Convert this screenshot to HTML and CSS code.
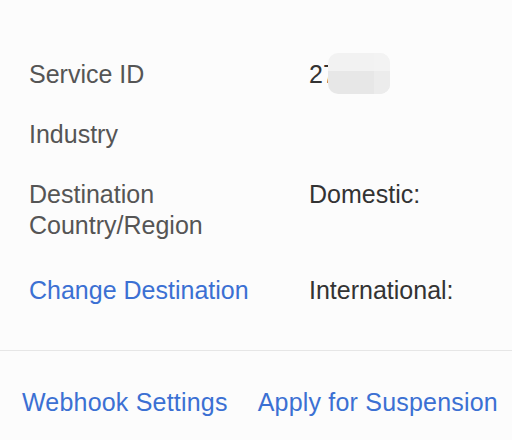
FILE: index.html
```html
<!DOCTYPE html>
<html>
<head>
<meta charset="utf-8">
<link rel="stylesheet" href="styles.css">
</head>
<body>
<div class="panel">
  <div class="info">
    <div class="row">
      <div class="label">Service ID</div>
      <div class="value id-value">27<span class="mask"></span></div>
    </div>
    <div class="row">
      <div class="label">Industry</div>
      <div class="value"></div>
    </div>
    <div class="row">
      <div class="label">Destination<br>Country/Region</div>
      <div class="value">Domestic:</div>
    </div>
    <div class="row row-link">
      <div class="label"><a class="link">Change Destination</a></div>
      <div class="value">International:</div>
    </div>
  </div>
  <div class="divider"></div>
  <div class="footer">
    <a class="link">Webhook Settings</a>
    <a class="link">Apply for Suspension</a>
  </div>
</div>
</body>
</html>
```
FILE: styles.css
```css
html, body {
  margin: 0;
  padding: 0;
  background: #fcfcfc;
}
body {
  font-family: "Liberation Sans", Arial, sans-serif;
  font-size: 25px;
  line-height: 31px;
  width: 512px;
  height: 440px;
  overflow: hidden;
}
.panel {
  display: flex;
  flex-direction: column;
}
.info {
  padding: 59px 0 0 29px;
  display: flex;
  flex-direction: column;
  gap: 29px;
}
.row {
  display: grid;
  grid-template-columns: 280px 1fr;
}
.row-link {
  margin-top: 5px;
}
.label {
  color: #555555;
}
.value {
  color: #333333;
  white-space: nowrap;
}
.id-value {
  position: relative;
  min-height: 31px;
}
.mask {
  position: absolute;
  left: 19px;
  top: -6px;
  width: 62px;
  height: 41px;
  border-radius: 10px;
  background: linear-gradient(to bottom, #f2f2f2 0, #f2f2f2 45%, #e7e7e7 45%, #e7e7e7 100%);
}
.mask::after {
  content: "";
  position: absolute;
  right: 0;
  top: 0;
  width: 16px;
  height: 100%;
  border-radius: 0 10px 10px 0;
  background: linear-gradient(to bottom, #f3f3f3 0, #f3f3f3 45%, #ececec 45%, #ececec 100%);
}
.link {
  color: #3b70d3;
  text-decoration: none;
  cursor: pointer;
}
.divider {
  margin-top: 44px;
  height: 1px;
  background: #e6e6e6;
}
.footer {
  display: flex;
  gap: 30px;
  padding: 36px 0 0 22px;
  letter-spacing: 0.2px;
}
```
